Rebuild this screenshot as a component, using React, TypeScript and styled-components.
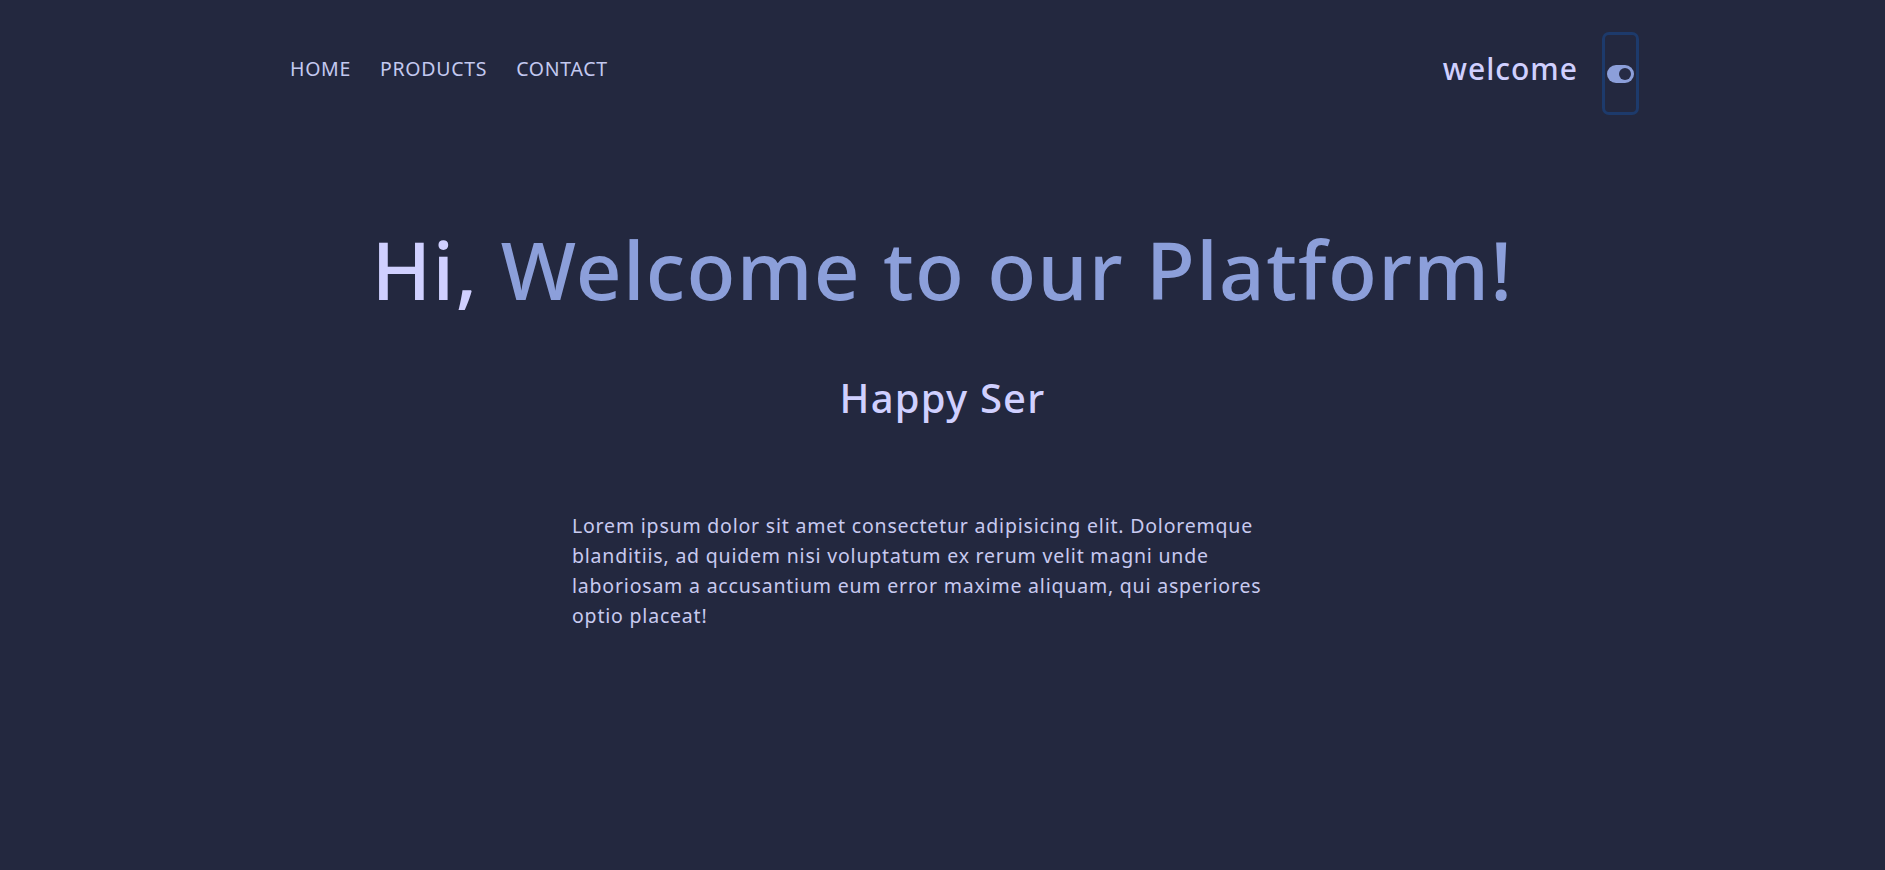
import React from "react";
import styled, { createGlobalStyle } from "styled-components";

const Global = createGlobalStyle`
  html, body { margin: 0; padding: 0; background: #23283f; }
  body { font-family: "Noto Sans", "Open Sans", sans-serif; min-height: 100vh; }
`;

const Page = styled.div`
  min-height: 870px;
  background: #23283f;
  display: flex;
  flex-direction: column;
`;

const Header = styled.header`
  display: flex;
  align-items: flex-start;
  justify-content: space-between;
  padding: 32px 246px 0 290px;
`;

const Nav = styled.nav`
  display: flex;
  gap: 29px;
  margin-top: 23px;
`;

const NavLink = styled.a`
  color: #c3c9f0;
  font-size: 19.5px;
  text-decoration: none;
  text-transform: uppercase;
  letter-spacing: 0.7px;
`;

const Right = styled.div`
  display: flex;
  align-items: flex-start;
  gap: 24px;
`;

const Welcome = styled.span`
  color: #d0d0ff;
  font-size: 30px;
  font-weight: 500;
  letter-spacing: 1px;
  margin-top: 16px;
`;

const ToggleBox = styled.button`
  width: 37px;
  height: 83px;
  box-sizing: border-box;
  border: 3px solid #1d3a6b;
  border-radius: 7px;
  background: transparent;
  padding: 0;
  display: flex;
  align-items: center;
  justify-content: center;
`;

const Main = styled.main`
  display: flex;
  flex-direction: column;
  align-items: center;
`;

const Title = styled.h1`
  margin: 106px 0 0;
  font-size: 80px;
  font-weight: 500;
  line-height: 1.2;
  letter-spacing: 1.3px;
  color: #8c9fda;
`;

const Hi = styled.span`
  color: #d0d0ff;
`;

const Sub = styled.h2`
  margin: 53px 0 0;
  font-size: 40px;
  font-weight: 500;
  letter-spacing: 1.2px;
  color: #d0d0ff;
`;

const TextWrap = styled.div`
  width: 741px;
  margin-top: 86px;
`;

const Para = styled.p`
  margin: 0;
  font-size: 19.5px;
  line-height: 30px;
  letter-spacing: 0.8px;
  color: #c8caf0;
`;

export default function App() {
  return (
    <Page>
      <Global />
      <Header>
        <Nav>
          <NavLink href="#">Home</NavLink>
          <NavLink href="#">Products</NavLink>
          <NavLink href="#">Contact</NavLink>
        </Nav>
        <Right>
          <Welcome>welcome</Welcome>
          <ToggleBox aria-label="toggle theme">
            <svg width="27" height="18" viewBox="0 0 27 18">
              <rect x="0" y="0" width="27" height="18" rx="9" fill="#8c9fda" />
              <circle cx="18" cy="9" r="6" fill="#262b45" />
            </svg>
          </ToggleBox>
        </Right>
      </Header>
      <Main>
        <Title>
          <Hi>Hi,</Hi> Welcome to our Platform!
        </Title>
        <Sub>Happy Ser</Sub>
        <TextWrap>
          <Para>
            Lorem ipsum dolor sit amet consectetur adipisicing elit. Doloremque
            blanditiis, ad quidem nisi voluptatum ex rerum velit magni unde
            laboriosam a accusantium eum error maxime aliquam, qui asperiores
            optio placeat!
          </Para>
        </TextWrap>
      </Main>
    </Page>
  );
}
